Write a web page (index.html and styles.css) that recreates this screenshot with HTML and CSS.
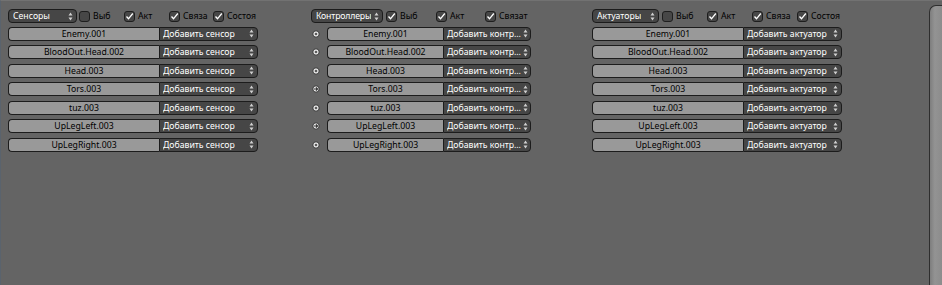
FILE: index.html
```html
<!DOCTYPE html>
<html>
<head>
<meta charset="utf-8">
<link rel="stylesheet" href="styles.css">
</head>
<body>
<div class="editor">
  <div class="columns">
    <section class="col col-sens">
      <div class="head">
        <div class="menu hmenu w-sens"><span>Сенсоры</span><svg class="arr" width="5" height="9" viewBox="0 0 5 9"><path d="M2.5 0.5 L4.5 3.5 L0.5 3.5 Z M0.5 5.5 L4.5 5.5 L2.5 8.5 Z"/></svg></div>
        <label class="chk first w45"><span class="box"></span>Выб</label>
        <label class="chk on w45"><span class="box"><svg width="9" height="9" viewBox="0 0 9 9"><path d="M1.5 4.5 L3.5 6.8 L7.8 1.5"/></svg></span>Акт</label>
        <label class="chk on w44"><span class="box"><svg width="9" height="9" viewBox="0 0 9 9"><path d="M1.5 4.5 L3.5 6.8 L7.8 1.5"/></svg></span>Связа</label>
        <label class="chk on"><span class="box"><svg width="9" height="9" viewBox="0 0 9 9"><path d="M1.5 4.5 L3.5 6.8 L7.8 1.5"/></svg></span>Состоя</label>
      </div>
      <div class="rows">
        <div class="row"><div class="name n-side">Enemy.001</div><div class="menu add a-side"><span>Добавить сенсор</span><svg class="arr" width="5" height="9" viewBox="0 0 5 9"><path d="M2.5 0.5 L4.5 3.5 L0.5 3.5 Z M0.5 5.5 L4.5 5.5 L2.5 8.5 Z"/></svg></div></div>
        <div class="row"><div class="name n-side">BloodOut.Head.002</div><div class="menu add a-side"><span>Добавить сенсор</span><svg class="arr" width="5" height="9" viewBox="0 0 5 9"><path d="M2.5 0.5 L4.5 3.5 L0.5 3.5 Z M0.5 5.5 L4.5 5.5 L2.5 8.5 Z"/></svg></div></div>
        <div class="row"><div class="name n-side">Head.003</div><div class="menu add a-side"><span>Добавить сенсор</span><svg class="arr" width="5" height="9" viewBox="0 0 5 9"><path d="M2.5 0.5 L4.5 3.5 L0.5 3.5 Z M0.5 5.5 L4.5 5.5 L2.5 8.5 Z"/></svg></div></div>
        <div class="row"><div class="name n-side">Tors.003</div><div class="menu add a-side"><span>Добавить сенсор</span><svg class="arr" width="5" height="9" viewBox="0 0 5 9"><path d="M2.5 0.5 L4.5 3.5 L0.5 3.5 Z M0.5 5.5 L4.5 5.5 L2.5 8.5 Z"/></svg></div></div>
        <div class="row"><div class="name n-side">tuz.003</div><div class="menu add a-side"><span>Добавить сенсор</span><svg class="arr" width="5" height="9" viewBox="0 0 5 9"><path d="M2.5 0.5 L4.5 3.5 L0.5 3.5 Z M0.5 5.5 L4.5 5.5 L2.5 8.5 Z"/></svg></div></div>
        <div class="row"><div class="name n-side">UpLegLeft.003</div><div class="menu add a-side"><span>Добавить сенсор</span><svg class="arr" width="5" height="9" viewBox="0 0 5 9"><path d="M2.5 0.5 L4.5 3.5 L0.5 3.5 Z M0.5 5.5 L4.5 5.5 L2.5 8.5 Z"/></svg></div></div>
        <div class="row"><div class="name n-side">UpLegRight.003</div><div class="menu add a-side"><span>Добавить сенсор</span><svg class="arr" width="5" height="9" viewBox="0 0 5 9"><path d="M2.5 0.5 L4.5 3.5 L0.5 3.5 Z M0.5 5.5 L4.5 5.5 L2.5 8.5 Z"/></svg></div></div>
      </div>
    </section>

    <section class="col col-cont">
      <div class="head">
        <div class="menu hmenu w-cont"><span>Контроллеры</span><svg class="arr" width="5" height="9" viewBox="0 0 5 9"><path d="M2.5 0.5 L4.5 3.5 L0.5 3.5 Z M0.5 5.5 L4.5 5.5 L2.5 8.5 Z"/></svg></div>
        <label class="chk on first w50"><span class="box"><svg width="9" height="9" viewBox="0 0 9 9"><path d="M1.5 4.5 L3.5 6.8 L7.8 1.5"/></svg></span>Выб</label>
        <label class="chk on w49"><span class="box"><svg width="9" height="9" viewBox="0 0 9 9"><path d="M1.5 4.5 L3.5 6.8 L7.8 1.5"/></svg></span>Акт</label>
        <label class="chk on"><span class="box"><svg width="9" height="9" viewBox="0 0 9 9"><path d="M1.5 4.5 L3.5 6.8 L7.8 1.5"/></svg></span>Связат</label>
      </div>
      <div class="rows">
        <div class="row"><svg class="link" width="8" height="8" viewBox="0 0 8 8"><circle cx="4" cy="4" r="3.2"/><circle class="dot" cx="4" cy="4" r="1.3"/></svg><div class="name n-cont">Enemy.001</div><div class="menu add c-side"><span>Добавить контр…</span><svg class="arr" width="5" height="9" viewBox="0 0 5 9"><path d="M2.5 0.5 L4.5 3.5 L0.5 3.5 Z M0.5 5.5 L4.5 5.5 L2.5 8.5 Z"/></svg></div></div>
        <div class="row"><svg class="link" width="8" height="8" viewBox="0 0 8 8"><circle cx="4" cy="4" r="3.2"/><circle class="dot" cx="4" cy="4" r="1.3"/></svg><div class="name n-cont">BloodOut.Head.002</div><div class="menu add c-side"><span>Добавить контр…</span><svg class="arr" width="5" height="9" viewBox="0 0 5 9"><path d="M2.5 0.5 L4.5 3.5 L0.5 3.5 Z M0.5 5.5 L4.5 5.5 L2.5 8.5 Z"/></svg></div></div>
        <div class="row"><svg class="link" width="8" height="8" viewBox="0 0 8 8"><circle cx="4" cy="4" r="3.2"/><circle class="dot" cx="4" cy="4" r="1.3"/></svg><div class="name n-cont">Head.003</div><div class="menu add c-side"><span>Добавить контр…</span><svg class="arr" width="5" height="9" viewBox="0 0 5 9"><path d="M2.5 0.5 L4.5 3.5 L0.5 3.5 Z M0.5 5.5 L4.5 5.5 L2.5 8.5 Z"/></svg></div></div>
        <div class="row"><svg class="link" width="8" height="8" viewBox="0 0 8 8"><circle cx="4" cy="4" r="3.2"/><path class="ar" d="M2 4 H5.6 M4 2.4 L5.6 4 L4 5.6"/></svg><div class="name n-cont">Tors.003</div><div class="menu add c-side"><span>Добавить контр…</span><svg class="arr" width="5" height="9" viewBox="0 0 5 9"><path d="M2.5 0.5 L4.5 3.5 L0.5 3.5 Z M0.5 5.5 L4.5 5.5 L2.5 8.5 Z"/></svg></div></div>
        <div class="row"><svg class="link" width="8" height="8" viewBox="0 0 8 8"><circle cx="4" cy="4" r="3.2"/><circle class="dot" cx="4" cy="4" r="1.3"/></svg><div class="name n-cont">tuz.003</div><div class="menu add c-side"><span>Добавить контр…</span><svg class="arr" width="5" height="9" viewBox="0 0 5 9"><path d="M2.5 0.5 L4.5 3.5 L0.5 3.5 Z M0.5 5.5 L4.5 5.5 L2.5 8.5 Z"/></svg></div></div>
        <div class="row"><svg class="link" width="8" height="8" viewBox="0 0 8 8"><circle cx="4" cy="4" r="3.2"/><path class="ar" d="M2 4 H5.6 M4 2.4 L5.6 4 L4 5.6"/></svg><div class="name n-cont">UpLegLeft.003</div><div class="menu add c-side"><span>Добавить контр…</span><svg class="arr" width="5" height="9" viewBox="0 0 5 9"><path d="M2.5 0.5 L4.5 3.5 L0.5 3.5 Z M0.5 5.5 L4.5 5.5 L2.5 8.5 Z"/></svg></div></div>
        <div class="row"><svg class="link" width="8" height="8" viewBox="0 0 8 8"><circle cx="4" cy="4" r="3.2"/><circle class="dot" cx="4" cy="4" r="1.3"/></svg><div class="name n-cont">UpLegRight.003</div><div class="menu add c-side"><span>Добавить контр…</span><svg class="arr" width="5" height="9" viewBox="0 0 5 9"><path d="M2.5 0.5 L4.5 3.5 L0.5 3.5 Z M0.5 5.5 L4.5 5.5 L2.5 8.5 Z"/></svg></div></div>
      </div>
    </section>

    <section class="col col-act">
      <div class="head">
        <div class="menu hmenu w-act"><span>Актуаторы</span><svg class="arr" width="5" height="9" viewBox="0 0 5 9"><path d="M2.5 0.5 L4.5 3.5 L0.5 3.5 Z M0.5 5.5 L4.5 5.5 L2.5 8.5 Z"/></svg></div>
        <label class="chk first w45"><span class="box"></span>Выб</label>
        <label class="chk on w45"><span class="box"><svg width="9" height="9" viewBox="0 0 9 9"><path d="M1.5 4.5 L3.5 6.8 L7.8 1.5"/></svg></span>Акт</label>
        <label class="chk on w45"><span class="box"><svg width="9" height="9" viewBox="0 0 9 9"><path d="M1.5 4.5 L3.5 6.8 L7.8 1.5"/></svg></span>Связа</label>
        <label class="chk on"><span class="box"><svg width="9" height="9" viewBox="0 0 9 9"><path d="M1.5 4.5 L3.5 6.8 L7.8 1.5"/></svg></span>Состоя</label>
      </div>
      <div class="rows">
        <div class="row"><div class="name n-side">Enemy.001</div><div class="menu add a-side"><span>Добавить актуатор</span><svg class="arr" width="5" height="9" viewBox="0 0 5 9"><path d="M2.5 0.5 L4.5 3.5 L0.5 3.5 Z M0.5 5.5 L4.5 5.5 L2.5 8.5 Z"/></svg></div></div>
        <div class="row"><div class="name n-side">BloodOut.Head.002</div><div class="menu add a-side"><span>Добавить актуатор</span><svg class="arr" width="5" height="9" viewBox="0 0 5 9"><path d="M2.5 0.5 L4.5 3.5 L0.5 3.5 Z M0.5 5.5 L4.5 5.5 L2.5 8.5 Z"/></svg></div></div>
        <div class="row"><div class="name n-side">Head.003</div><div class="menu add a-side"><span>Добавить актуатор</span><svg class="arr" width="5" height="9" viewBox="0 0 5 9"><path d="M2.5 0.5 L4.5 3.5 L0.5 3.5 Z M0.5 5.5 L4.5 5.5 L2.5 8.5 Z"/></svg></div></div>
        <div class="row"><div class="name n-side">Tors.003</div><div class="menu add a-side"><span>Добавить актуатор</span><svg class="arr" width="5" height="9" viewBox="0 0 5 9"><path d="M2.5 0.5 L4.5 3.5 L0.5 3.5 Z M0.5 5.5 L4.5 5.5 L2.5 8.5 Z"/></svg></div></div>
        <div class="row"><div class="name n-side">tuz.003</div><div class="menu add a-side"><span>Добавить актуатор</span><svg class="arr" width="5" height="9" viewBox="0 0 5 9"><path d="M2.5 0.5 L4.5 3.5 L0.5 3.5 Z M0.5 5.5 L4.5 5.5 L2.5 8.5 Z"/></svg></div></div>
        <div class="row"><div class="name n-side">UpLegLeft.003</div><div class="menu add a-side"><span>Добавить актуатор</span><svg class="arr" width="5" height="9" viewBox="0 0 5 9"><path d="M2.5 0.5 L4.5 3.5 L0.5 3.5 Z M0.5 5.5 L4.5 5.5 L2.5 8.5 Z"/></svg></div></div>
        <div class="row"><div class="name n-side">UpLegRight.003</div><div class="menu add a-side"><span>Добавить актуатор</span><svg class="arr" width="5" height="9" viewBox="0 0 5 9"><path d="M2.5 0.5 L4.5 3.5 L0.5 3.5 Z M0.5 5.5 L4.5 5.5 L2.5 8.5 Z"/></svg></div></div>
      </div>
    </section>
  </div>
  <div class="scrollbar"></div>
</div>
</body>
</html>
```
FILE: styles.css
```css
* { box-sizing: border-box; }
html, body { margin: 0; padding: 0; }
body {
  width: 942px;
  height: 285px;
  overflow: hidden;
  background: #646464;
  font-family: "Noto Sans", "Liberation Sans", sans-serif;
  font-size: 8.7px;
}
.editor {
  position: relative;
  width: 942px;
  height: 285px;
  background: #646464;
  border-top: 1px solid #727272;
  border-left: 1px solid #5a636d;
}
.columns {
  display: flex;
  align-items: flex-start;
  padding: 8px 0 0 7px;
}
.col { display: flex; flex-direction: column; flex: none; }
.col-sens { width: 250px; }
.col-cont { width: 221px; margin-left: 52px; }
.col-act { width: 250px; margin-left: 61px; }

.head {
  display: flex;
  align-items: center;
  height: 14px;
}
.head > * { flex: none; }
.col-cont .head { padding-left: 1px; }

.menu {
  display: flex;
  align-items: center;
  justify-content: space-between;
  height: 14px;
  background: #464646;
  color: #ffffff;
  border: 1px solid #1c1c1c;
  padding: 0 3px 0 4px;
  line-height: 12px;
  white-space: nowrap;
}
.menu span { overflow: hidden; }
.hmenu { border-radius: 4px; }
.w-sens { width: 69px; }
.w-cont { width: 72px; letter-spacing: -0.15px; }
.w-act { width: 67px; }
.arr { flex: none; fill: #d0d0d0; }

.chk {
  display: flex;
  align-items: center;
  gap: 3px;
  color: #000;
  line-height: 12px;
  white-space: nowrap;
}
.chk.first { margin-left: 2px; }
.col-cont .chk.first, .col-act .chk.first { margin-left: 3px; }
.w44 { width: 44px; }
.w45 { width: 45px; }
.w49 { width: 49px; }
.w50 { width: 50px; }
.box {
  flex: none;
  width: 11px;
  height: 11px;
  border: 1px solid #1e1e1e;
  border-radius: 3px;
  background: #474747;
  display: flex;
  align-items: center;
  justify-content: center;
}
.box svg path { fill: none; stroke: #ffffff; stroke-width: 1.3; }

.rows {
  display: flex;
  flex-direction: column;
  gap: 4.5px;
  margin-top: 3.5px;
}
.row {
  display: flex;
  align-items: center;
  height: 14px;
}
.row > * { flex: none; }
.name {
  height: 14px;
  background: #999999;
  color: #000;
  border: 1px solid #1c1c1c;
  border-right: none;
  border-radius: 4px 0 0 4px;
  text-align: center;
  line-height: 12px;
  white-space: nowrap;
}
.n-side { width: 151px; }
.n-cont { width: 116px; margin-left: 7px; }
.add { border-radius: 0 4px 4px 0; padding-left: 3px; }
.a-side { width: 99px; }
.c-side { width: 88px; padding-right: 2px; }

.link { margin-left: 2px; }
.link circle { fill: #e6e6e6; stroke: #2a2a2a; stroke-width: 0.9; }
.link circle.dot { fill: #5c5c5c; stroke: none; }
.link .ar { fill: none; stroke: #333; stroke-width: 1.1; }

.scrollbar {
  position: absolute;
  right: 0;
  top: 4px;
  width: 13px;
  height: 290px;
  border: 1px solid #2e2e2e;
  border-right: none;
  border-radius: 7px 0 0 0;
  background: linear-gradient(to right, #7e7e7e, #939393 40%, #8c8c8c);
}
```
